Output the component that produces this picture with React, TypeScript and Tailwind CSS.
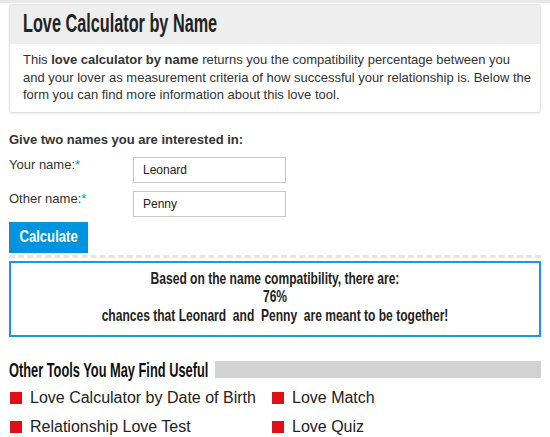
import React from 'react'

const arial = { fontFamily: '"Liberation Sans", Arial, sans-serif' }

function Tool({ label }: { label: string }) {
  return (
    <div className="flex h-[18px] items-center gap-[8px] text-[16px] leading-[18px] text-[#222]">
      <span className="inline-block h-[12px] w-[12px] bg-[#e00f17]" />
      <span>{label}</span>
    </div>
  )
}

export default function App() {
  return (
    <div className="relative h-[437px] w-[550px] overflow-hidden bg-white" style={arial}>
      <div className="h-[3px] w-full bg-[#e8e8e8]" />
      <div className="px-[9px] pt-[1px]">
        <div className="overflow-hidden rounded-[3px] border border-[#e2e2e2] shadow-[0_1px_2px_rgba(0,0,0,0.08)]">
          <div className="flex h-[39px] items-center bg-[#eeeeee] px-[13px]">
            <h1 className="w-[200px] whitespace-nowrap">
              <span className="inline-block origin-left scale-x-[0.65] text-[25px] leading-none font-bold text-[#222]">
                Love Calculator by Name
              </span>
            </h1>
          </div>
          <p className="pt-[7px] pr-[8px] pb-[8px] pl-[13px] text-[13px] leading-[17.5px] text-[#333]">
            This <b>love calculator by name</b> returns you the compatibility percentage between you
            and your lover as measurement criteria of how successful your relationship is. Below the
            form you can find more information about this love tool.
          </p>
        </div>

        <div className="mt-[19px] text-[13px] leading-[15px] font-bold text-[#333]">Give two names you are interested in:</div>

        <div className="mt-[10px] flex flex-col gap-[8px]">
          <div className="flex items-start">
            <span className="w-[124px] text-[13px] leading-[15px] text-[#333]">
              Your name:<span className="text-[#0092dd]">*</span>
            </span>
            <div className="flex h-[26px] w-[153px] items-center border border-[#c9c9c9] px-[9px] text-[12px] text-[#222]">
              Leonard
            </div>
          </div>
          <div className="flex items-start">
            <span className="w-[124px] text-[13px] leading-[15px] text-[#333]">
              Other name:<span className="text-[#0092dd]">*</span>
            </span>
            <div className="flex h-[26px] w-[153px] items-center border border-[#c9c9c9] px-[9px] text-[12px] text-[#222]">
              Penny
            </div>
          </div>
        </div>

        <button className="mt-[5px] flex h-[31px] w-[79px] items-center justify-center bg-[#0093de] text-white">
          <span className="inline-block scale-x-[0.82] text-[16px] leading-none font-bold">Calculate</span>
        </button>

        <div className="mt-[2px] border-t-[3px] border-dashed border-[#e6e6e6]" />

        <div className="mt-[3px] flex h-[76px] flex-col justify-center border-2 border-[#1c97e4] pb-[4px] text-[#222]">
          <div className="scale-x-[0.73] text-center text-[16.5px] leading-[18.5px] font-bold whitespace-nowrap">
            <div>Based on the name compatibility, there are:</div>
            <div>76%</div>
            <div>chances that Leonard&nbsp; and&nbsp; Penny&nbsp; are meant to be together!</div>
          </div>
        </div>

        <div className="mt-[24px] flex h-[17px] items-center gap-[4px]">
          <h2 className="flex h-[17px] w-[202px] items-center whitespace-nowrap">
            <span className="inline-block origin-left scale-x-[0.61] text-[21px] leading-none font-bold text-[#111]">
              Other Tools You May Find Useful
            </span>
          </h2>
          <div className="h-[17px] flex-1 bg-[#d2d2d2]" />
        </div>

        <div className="mt-[11px] grid grid-cols-[262px_1fr] gap-y-[11px] pl-[1px]">
          <Tool label="Love Calculator by Date of Birth" />
          <Tool label="Love Match" />
          <Tool label="Relationship Love Test" />
          <Tool label="Love Quiz" />
        </div>
      </div>
    </div>
  )
}
